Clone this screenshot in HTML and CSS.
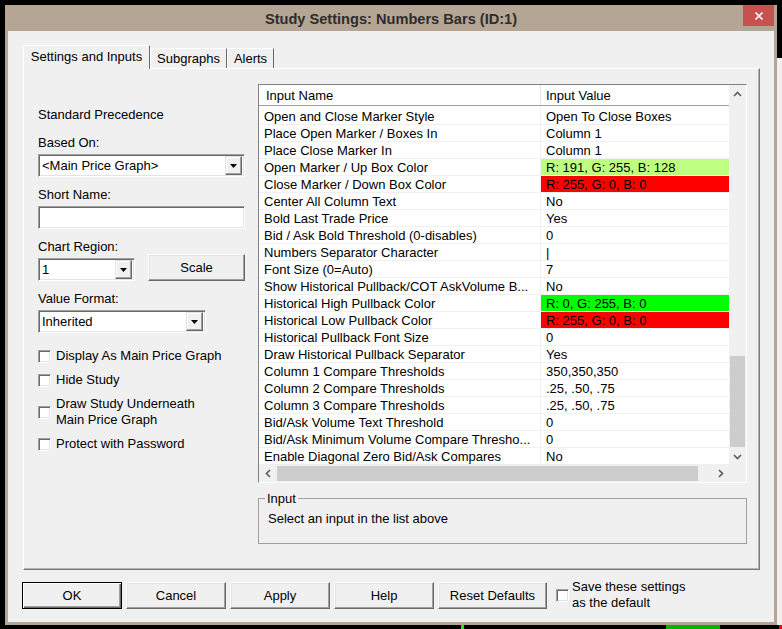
FILE: index.html
```html
<!DOCTYPE html>
<html lang="en">
<head>
  <meta charset="UTF-8"/>
  <title>Study Settings: Numbers Bars (ID:1)</title>
  <link rel="stylesheet" href="styles.css">
</head>
<body>

<div class="screen">
  <div class="window">
    <div class="titlebar">
      <span></span>
      <div class="title">Study Settings: Numbers Bars (ID:1)</div>
      <div class="close-btn">
        <svg width="10" height="10" viewBox="0 0 10 10"><path d="M1.5 1.5L8.5 8.5M8.5 1.5L1.5 8.5" stroke="#fff" stroke-width="1.7"/></svg>
      </div>
    </div>

    <div class="client">
      <div class="tabs">
        <div class="tab active tab-settings">Settings and Inputs</div>
        <div class="tab tab-subgraphs">Subgraphs</div>
        <div class="tab tab-alerts">Alerts</div>
      </div>

      <div class="tab-page">
        <!-- left side controls -->
        <div class="left-col">
          <div class="heading">Standard Precedence</div>

          <div class="lbl">Based On:</div>
          <div class="combo combo-based">
            <span class="combo-text">&lt;Main Price Graph&gt;</span>
            <span class="drop-btn"><svg width="7" height="4" viewBox="0 0 7 4"><polygon points="0,0 7,0 3.5,4" fill="#000"/></svg></span>
          </div>

          <div class="lbl">Short Name:</div>
          <div class="text-input"></div>

          <div class="lbl">Chart Region:</div>
          <div class="region-row">
            <div class="combo combo-region">
              <span class="combo-text">1</span>
              <span class="drop-btn"><svg width="7" height="4" viewBox="0 0 7 4"><polygon points="0,0 7,0 3.5,4" fill="#000"/></svg></span>
            </div>
            <div class="btn btn-scale">Scale</div>
          </div>

          <div class="lbl">Value Format:</div>
          <div class="combo combo-format">
            <span class="combo-text">Inherited</span>
            <span class="drop-btn"><svg width="7" height="4" viewBox="0 0 7 4"><polygon points="0,0 7,0 3.5,4" fill="#000"/></svg></span>
          </div>

          <div class="checks">
            <div class="check-row"><span class="checkbox"></span><span>Display As Main Price Graph</span></div>
            <div class="check-row"><span class="checkbox"></span><span>Hide Study</span></div>
            <div class="check-row"><span class="checkbox"></span><span>Draw Study Underneath<br>Main Price Graph</span></div>
            <div class="check-row"><span class="checkbox"></span><span>Protect with Password</span></div>
          </div>
        </div>

        <!-- inputs list -->
        <div class="right-col">
          <div class="list">
            <div class="grid-view">
              <div class="grid-header">
                <div class="hdr-name">Input Name</div>
                <div class="hdr-value">Input Value</div>
              </div>
              <div class="grid-rows">
                <div class="row"><div class="cell-name">Open and Close Marker Style</div><div class="cell-value">Open To Close Boxes</div></div>
                <div class="row"><div class="cell-name">Place Open Marker / Boxes In</div><div class="cell-value">Column 1</div></div>
                <div class="row"><div class="cell-name">Place Close Marker In</div><div class="cell-value">Column 1</div></div>
                <div class="row"><div class="cell-name">Open Marker / Up Box Color</div><div class="cell-value swatch-lime">R: 191, G: 255, B: 128</div></div>
                <div class="row"><div class="cell-name">Close Marker / Down Box Color</div><div class="cell-value swatch-red">R: 255, G: 0, B: 0</div></div>
                <div class="row"><div class="cell-name">Center All Column Text</div><div class="cell-value">No</div></div>
                <div class="row"><div class="cell-name">Bold Last Trade Price</div><div class="cell-value">Yes</div></div>
                <div class="row"><div class="cell-name">Bid / Ask Bold Threshold (0-disables)</div><div class="cell-value">0</div></div>
                <div class="row"><div class="cell-name">Numbers Separator Character</div><div class="cell-value">|</div></div>
                <div class="row"><div class="cell-name">Font Size (0=Auto)</div><div class="cell-value">7</div></div>
                <div class="row"><div class="cell-name">Show Historical Pullback/COT AskVolume B...</div><div class="cell-value">No</div></div>
                <div class="row"><div class="cell-name">Historical High Pullback Color</div><div class="cell-value swatch-green">R: 0, G: 255, B: 0</div></div>
                <div class="row"><div class="cell-name">Historical Low Pullback Color</div><div class="cell-value swatch-red">R: 255, G: 0, B: 0</div></div>
                <div class="row"><div class="cell-name">Historical Pullback Font Size</div><div class="cell-value">0</div></div>
                <div class="row"><div class="cell-name">Draw Historical Pullback Separator</div><div class="cell-value">Yes</div></div>
                <div class="row"><div class="cell-name">Column 1 Compare Thresholds</div><div class="cell-value">350,350,350</div></div>
                <div class="row"><div class="cell-name">Column 2 Compare Thresholds</div><div class="cell-value">.25, .50, .75</div></div>
                <div class="row"><div class="cell-name">Column 3 Compare Thresholds</div><div class="cell-value">.25, .50, .75</div></div>
                <div class="row"><div class="cell-name">Bid/Ask Volume Text Threshold</div><div class="cell-value">0</div></div>
                <div class="row"><div class="cell-name">Bid/Ask Minimum Volume Compare Thresho...</div><div class="cell-value">0</div></div>
                <div class="row"><div class="cell-name">Enable Diagonal Zero Bid/Ask Compares</div><div class="cell-value">No</div></div>
              </div>
            </div>

            <div class="vscroll">
              <div class="sb-btn"><svg width="9" height="6" viewBox="0 0 9 6"><polyline points="1,5 4.5,1.5 8,5" fill="none" stroke="#606060" stroke-width="1.7"/></svg></div>
              <div class="sb-track"><div class="vthumb"></div></div>
              <div class="sb-btn"><svg width="9" height="6" viewBox="0 0 9 6"><polyline points="1,1 4.5,4.5 8,1" fill="none" stroke="#606060" stroke-width="1.7"/></svg></div>
            </div>

            <div class="hscroll">
              <div class="sb-btn"><svg width="6" height="9" viewBox="0 0 6 9"><polyline points="5,1 1.5,4.5 5,8" fill="none" stroke="#606060" stroke-width="1.7"/></svg></div>
              <div class="sb-track"><div class="hthumb"></div></div>
              <div class="sb-btn"><svg width="6" height="9" viewBox="0 0 6 9"><polyline points="1,1 4.5,4.5 1,8" fill="none" stroke="#606060" stroke-width="1.7"/></svg></div>
            </div>
            <div class="sb-corner"></div>
          </div>

          <fieldset class="input-box">
            <legend>Input</legend>
            <p>Select an input in the list above</p>
          </fieldset>
        </div>
      </div>

      <div class="button-row">
        <div class="btn btn-default">OK</div>
        <div class="btn">Cancel</div>
        <div class="btn">Apply</div>
        <div class="btn">Help</div>
        <div class="btn btn-reset">Reset Defaults</div>
        <span class="checkbox save-check"></span>
        <span class="save-text">Save these settings<br>as the default</span>
      </div>
    </div>
  </div>

  <div class="side-right"></div>

  <div class="desk-bottom">
    <span class="gap-a"></span>
    <span class="mark-green"></span>
    <span class="gap-b"></span>
    <span class="bar-green"></span>
    <span class="gap-c"></span>
    <span class="mark-red"></span>
  </div>
</div>

</body>
</html>
```

FILE: styles.css
```css
* { box-sizing: border-box; }

body {
  margin: 0;
  width: 782px; height: 629px;
  overflow: hidden;
  background: #000;
  font: 13px/16px "Liberation Sans", Arial, sans-serif;
  color: #000;
}

.screen {
  display: grid;
  grid-template-columns: 5px 772px 5px;
  grid-template-rows: 5px 620px 4px;
}

/* window frame */
.window {
  grid-column: 2; grid-row: 2;
  background: #b5a594;
  padding: 0 3px 3px;
  display: flex; flex-direction: column;
}
.titlebar {
  height: 26px;
  display: grid;
  grid-template-columns: 1fr auto 1fr;
  align-items: center;
}
.title {
  font-weight: bold; font-size: 14.6px;
  color: #2d2d2d;
  padding-top: 1px;
}
.close-btn {
  justify-self: end; align-self: start;
  width: 31px; height: 21px;
  background: #c75050;
  display: flex; align-items: center; justify-content: center;
}

.client {
  flex: 1;
  background: #f0f0f0;
  padding: 14px 0 0 15px;
}

/* tabs */
.tabs {
  display: flex; align-items: flex-end;
  height: 23px;
}
.tab {
  height: 20px;
  border: 1px solid;
  border-color: #fff #696969 transparent #fff;
  border-bottom: 0;
  padding-top: 2px;
  text-align: center;
  background: #f0f0f0;
  white-space: nowrap;
}
.tab.active {
  height: 24px;
  margin-bottom: -1px;
  padding-top: 3px;
  position: relative; z-index: 1;
}
.tab-settings { width: 127px; }
.tab-subgraphs { width: 77px; }
.tab-alerts { width: 47px; }

.tab-page {
  width: 737px; height: 502px;
  border: 1px solid;
  border-color: #fff #7a7a7a #7a7a7a #fff;
  box-shadow: inset -1px -1px 0 #b4b4b4;
  display: flex; gap: 13px;
  padding: 15px 12px 0 14px;
}

/* left column */
.left-col {
  width: 207px;
  display: flex; flex-direction: column;
}
.heading { margin-top: 23px; margin-bottom: 2px; }
.lbl { margin-top: 10px; margin-bottom: -1px; }

.combo, .text-input, .checkbox {
  background: #fff;
  border: 1px solid;
  border-color: #a0a0a0 #fff #fff #a0a0a0;
  box-shadow: inset 1px 1px 0 #696969, inset -1px -1px 0 #e3e3e3;
}
.combo {
  height: 23px; margin-top: 4px;
  display: flex; align-items: center;
  padding: 2px;
}
.combo-text { flex: 1; padding: 1px 0 0 1px; white-space: nowrap; }
.combo-based { width: 207px; }
.combo-region { width: 97px; margin-top: 0; }
.combo-format { width: 168px; }
.drop-btn {
  width: 17px; height: 19px;
  background: #f0f0f0;
  border: 1px solid;
  border-color: #e3e3e3 #696969 #696969 #e3e3e3;
  box-shadow: inset -1px -1px 0 #a0a0a0, inset 1px 1px 0 #fff;
  display: flex; align-items: center; justify-content: center;
}
.text-input { height: 23px; margin-top: 4px; }

.region-row {
  display: flex; justify-content: space-between; align-items: flex-end;
  height: 27px;
}

.btn {
  height: 27px;
  background: #f0f0f0;
  border: 1px solid;
  border-color: #fff #696969 #696969 #fff;
  box-shadow: inset -1px -1px 0 #a0a0a0, inset 1px 1px 0 #e3e3e3;
  display: flex; align-items: center; justify-content: center;
  padding-top: 1px;
  white-space: nowrap;
}
.btn-scale { width: 97px; }

.checks {
  margin-top: 15px;
  display: flex; flex-direction: column; gap: 8px;
}
.check-row { display: flex; align-items: center; gap: 5px; }
.checkbox { width: 13px; height: 13px; flex: none; }

/* inputs list */
.right-col { display: flex; flex-direction: column; }
.list {
  width: 489px; height: 399px;
  border: 1px solid;
  border-color: #828282 #fff #fff #828282;
  background: #fff;
  display: grid;
  grid-template-columns: 470px 17px;
  grid-template-rows: 380px 17px;
}
.grid-view { overflow: hidden; }
.grid-header {
  height: 21px;
  display: grid; grid-template-columns: 282px 188px;
  border-bottom: 1px solid #a0a0a0;
}
.hdr-name { padding: 3px 0 0 7px; border-right: 1px solid #e5e5e5; }
.hdr-value { padding: 3px 0 0 5px; }
.grid-rows { padding-top: 2px; }
.row {
  height: 17px;
  display: grid; grid-template-columns: 282px 188px;
  border-bottom: 1px solid #f0f0f0;
  white-space: nowrap;
}
.cell-name { padding: 1px 0 0 5px; border-right: 1px solid #f0f0f0; overflow: hidden; }
.cell-value { padding: 1px 0 0 5px; overflow: hidden; }
.swatch-lime { background: #bfff80; }
.swatch-red { background: #ff0000; }
.swatch-green { background: #00ff00; }

.vscroll, .hscroll, .sb-corner { background: #f0f0f0; }
.vscroll { display: flex; flex-direction: column; }
.hscroll { display: flex; }
.sb-btn {
  width: 17px; height: 17px; flex: none;
  display: flex; align-items: center; justify-content: center;
}
.sb-track { flex: 1; }
.vthumb {
  margin: 254px 1px 0;
  height: 91px;
  background: #cdcdcd;
}
.hthumb {
  margin: 1px 0 0 1px;
  width: 421px; height: 15px;
  background: #cdcdcd;
}

.input-box {
  width: 489px;
  margin: 7px 0 0;
  padding: 0 8px 16px 6px;
  border: 1px solid #a0a0a0;
  min-width: 0;
}
.input-box legend { padding: 1px 2px 0; }
.input-box p { margin: 4px 0 0 3px; }

/* bottom buttons */
.button-row {
  margin: 9px 0 0 -1px;
  display: flex; align-items: center; gap: 4px;
}
.button-row .btn { width: 100px; }
.button-row .btn-reset { width: 109px; }
.btn-default {
  border-color: #000;
  box-shadow: inset 1px 1px 0 #fff, inset -1px -1px 0 #696969, inset -2px -2px 0 #a0a0a0;
}
.save-check { margin-left: 5px; }
.save-text { margin-left: -1px; }

/* desktop around the window */
.side-right {
  grid-column: 3; grid-row: 2;
  margin-top: 53px;
  background: #f0f0f0;
}
.desk-bottom { grid-column: 1 / 4; grid-row: 3; display: flex; }
.gap-a { width: 461px; }
.mark-green { width: 3px; background: #00ff00; }
.gap-b { width: 202px; }
.bar-green { width: 54px; background: #00b400; }
.gap-c { flex: 1; }
.mark-red { width: 3px; background: #ff0000; }
```
